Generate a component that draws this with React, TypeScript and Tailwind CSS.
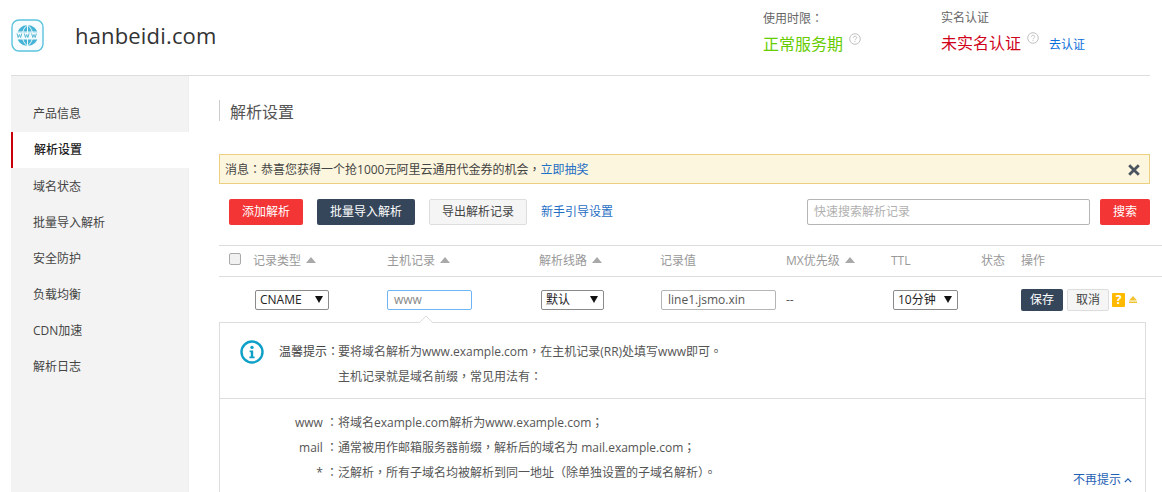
import React from "react";

function T({ s }: { s: string }) {
  const parts = s.split(/([，。：；（）])/);
  return (
    <>
      {parts.map((p, i) =>
        /^[，。：；（）]$/.test(p) ? (
          <span key={i} className="font-['Noto_Sans_CJK_TC',sans-serif]">{p}</span>
        ) : (
          <React.Fragment key={i}>{p}</React.Fragment>
        )
      )}
    </>
  );
}

function Q({ className = "" }: { className?: string }) {
  return (
    <svg viewBox="0 0 12 12" className={"w-3 h-3 " + className} fill="none" stroke="#c0c0c0" strokeWidth="1">
      <circle cx="6" cy="6" r="5.3" />
      <path d="M4.4 4.8c0-2.1 3.3-2.1 3.3-.1 0 1.2-1.7 1.3-1.7 2.6" />
      <path d="M6 8.2v1" />
    </svg>
  );
}

function Sort() {
  return (
    <svg viewBox="0 0 10 6" className="w-[10px] h-[6px] ml-[5px] mt-[-2px]" fill="#a9a9a9">
      <path d="M5 0 10 6H0z" />
    </svg>
  );
}

function Sel({ label, className }: { label: string; className: string }) {
  return (
    <div className={"h-5 border border-[#8a8a8a] rounded-[2px] bg-white flex items-center justify-between pl-[4px] pr-[5px] text-[12px] text-[#222] " + className}>
      <span>{label}</span>
      <svg viewBox="0 0 8 7" className="w-2 h-[7px]" fill="#111">
        <path d="M0 0h8L4 7z" />
      </svg>
    </div>
  );
}

const nav = ["产品信息", "解析设置", "域名状态", "批量导入解析", "安全防护", "负载均衡", "CDN加速", "解析日志"];

function Head({ label, sort }: { label: string; sort?: boolean }) {
  return (
    <div className="flex items-center text-[12px] text-[#999]">
      <span>{label}</span>
      {sort && <Sort />}
    </div>
  );
}

export default function App() {
  return (
    <div className="h-[492px] w-[1162px] overflow-hidden bg-white pl-[11px] font-['Open_Sans','Noto_Sans_CJK_SC',sans-serif] text-[12px] text-[#555]">
      <header className="h-[76px] w-[1139px] border-b border-[#dddddd] flex relative">
        <svg viewBox="0 0 33 33" className="w-[33px] h-[33px] mt-[19px]">
          <rect x="1" y="1" width="31" height="31" rx="7" fill="#f7fcfe" stroke="#5cc3de" strokeWidth="1.4" />
          <circle cx="16.5" cy="16.5" r="10.5" fill="#45b4d6" />
          <path d="M6 13h21M6 20h21" stroke="#fff" strokeWidth="0.9" />
          <path d="M16.5 6v21M16.5 6c-7 5-7 16 0 21M16.5 6c7 5 7 16 0 21" stroke="#fff" strokeWidth="0.9" fill="none" />
          <rect x="4" y="13.5" width="25" height="6.5" fill="#f2fbfd" />
          <path d="M6 14.5l1.2 4 1.2-3 1.2 3 1.2-4M13.3 14.5l1.2 4 1.2-3 1.2 3 1.2-4M20.6 14.5l1.2 4 1.2-3 1.2 3 1.2-4" stroke="#3aa9cc" strokeWidth="0.8" fill="none" />
        </svg>
        <div className="ml-[31px] mt-[18px] text-[22px] tracking-[0.17px] leading-[34px] text-[#333]">hanbeidi.com</div>
        <div className="ml-auto mr-[65px] flex">
          <div className="w-[178px] pt-[11px]">
            <div className="text-[12px] leading-[14px] text-[#666]"><T s="使用时限：" /></div>
            <div className="flex items-start mt-[6px]">
              <span className="text-[16px] leading-[24px] text-[#66cc00]">正常服务期</span>
              <Q className="ml-[6px] mt-[1px]" />
            </div>
          </div>
          <div className="w-[144px] pt-[11px]">
            <div className="text-[12px] leading-[14px] text-[#666]">实名认证</div>
            <div className="flex items-start mt-[6px] whitespace-nowrap">
              <span className="text-[16px] leading-[24px] text-[#d0021b]">未实名认证</span>
              <Q className="ml-[6px] mt-[1px]" />
              <a className="ml-[10px] mt-[4px] text-[12px] leading-[20px] text-[#0a6ed8]">去认证</a>
            </div>
          </div>
        </div>
      </header>

      <div className="flex">
        <aside className="w-[178px] h-[416px] shrink-0 bg-[#f3f3f3] pt-[20px] border-r border-[#eeeeee]">
          {nav.map((n, i) =>
            i === 1 ? (
              <div key={n} className="h-9 -mr-px mb-px bg-white border-l-2 border-[#c8000a] pl-[21px] flex items-center font-medium text-[#222]">{n}</div>
            ) : (
              <div key={n} className="h-9 pl-[22px] flex items-center text-[#444]">{n}</div>
            )
          )}
        </aside>

        <main className="pl-[30px] w-[973px] shrink-0">
          <div className="mt-[24px] h-[21px] border-l border-[#cccccc] pl-[10px] text-[16px] leading-[24px] text-[#555]">解析设置</div>

          <div className="mt-[33px] w-[931px] h-[30px] border border-[#ecd07f] bg-[#fdf6de] flex items-center pl-[5px] pr-[9px] text-[#444]">
            <span><T s="消息：恭喜您获得一个抢1000元阿里云通用代金券的机会，" /><a className="text-[#1f6fc4]">立即抽奖</a></span>
            <svg viewBox="0 0 12 12" className="w-3 h-3 ml-auto mt-[2px]" stroke="#4a5560" strokeWidth="2.8" fill="none">
              <path d="M1.2 1.2l9.6 9.6M10.8 1.2l-9.6 9.6" />
            </svg>
          </div>

          <div className="mt-[15px] w-[931px] pl-[10px] flex items-center">
            <button className="w-[74px] h-[26px] rounded-[2px] bg-[#f33535] text-white text-[12px]">添加解析</button>
            <button className="ml-[14px] w-[98px] h-[26px] rounded-[2px] bg-[#36465a] text-white text-[12px]">批量导入解析</button>
            <button className="ml-[14px] w-[98px] h-[26px] rounded-[2px] bg-[#f5f5f5] border border-[#dddddd] text-[#444] text-[12px]">导出解析记录</button>
            <a className="ml-[14px] text-[#1f6fc4]">新手引导设置</a>
            <div className="ml-auto w-[283px] h-[26px] border border-[#b5b5b5] rounded-[2px] flex items-center pl-[6px] text-[#b0b0b0]">快速搜索解析记录</div>
            <button className="ml-[10px] w-[50px] h-[26px] rounded-[2px] bg-[#f33535] text-white text-[12px]">搜索</button>
          </div>

          <div className="mt-[20px] w-[943px] h-[32px] border-y border-[#dddddd] grid grid-cols-[34px_134px_152px_121px_126px_105px_90px_40px_1fr] items-center">
            <div className="pl-[10px]">
              <div className="w-3 h-3 mt-[-4px] rounded-[2px] border border-[#aaaaaa] bg-[#f1f1f1]" />
            </div>
            <Head label="记录类型" sort />
            <Head label="主机记录" sort />
            <Head label="解析线路" sort />
            <Head label="记录值" />
            <Head label="MX优先级" sort />
            <Head label="TTL" />
            <Head label="状态" />
            <Head label="操作" />
          </div>

          <div className="w-[943px] h-[45px] grid grid-cols-[34px_134px_152px_121px_126px_105px_90px_40px_1fr] items-center">
            <div />
            <Sel label="CNAME" className="ml-[2px] w-[74px]" />
            <div className="h-5 w-[85px] border border-[#6fb5f5] rounded-[2px] pl-[6px] flex items-center text-[#888]">www</div>
            <Sel label="默认" className="ml-[2px] w-[63px]" />
            <div className="h-5 ml-[1px] w-[115px] border border-[#b5b5b5] rounded-[2px] pl-[6px] flex items-center text-[#555]">line1.jsmo.xin</div>
            <div className="text-[#555]">--</div>
            <Sel label="10分钟" className="ml-[2px] w-[65px]" />
            <div />
            <div className="flex items-center whitespace-nowrap">
              <button className="w-[42px] h-[22px] rounded-[2px] bg-[#36465a] text-white text-[12px]">保存</button>
              <button className="ml-[4px] w-[42px] h-[22px] rounded-[2px] bg-[#f5f5f5] border border-[#dddddd] text-[#444] text-[12px]">取消</button>
              <span className="ml-[3px] w-[13px] h-[14px] bg-[#ffba00] rounded-[1px] text-white text-[12px] leading-[14px] font-bold text-center">?</span>
              <svg viewBox="0 0 8 7" className="ml-[4px] w-2 h-[7px]" fill="#f2c230">
                <path d="M4 0l4 4.5H0zM0 5.5h8V7H0z" />
              </svg>
            </div>
          </div>

          <div className="relative w-[927px] h-[200px] border border-[#dddddd] text-[#555]">
            <svg viewBox="0 0 14 7" className="absolute left-[199px] top-[-7px] w-[14px] h-[7px]">
              <path d="M0 7 7 0l7 7" fill="#fff" stroke="#dddddd" />
            </svg>
            <div className="h-[76px] border-b border-[#dddddd] flex relative">
              <svg viewBox="0 0 24 24" className="ml-[20px] mt-[17px] w-6 h-6" fill="none">
                <circle cx="12" cy="12" r="10.5" stroke="#0fa0c8" strokeWidth="2.4" />
                <circle cx="12" cy="7.4" r="1.7" fill="#0fa0c8" />
                <path d="M9.6 10.6h3.6v6h1.4v1.6H9.4v-1.6h1.4v-4.4H9.6z" fill="#0fa0c8" />
              </svg>
              <div className="ml-[15px] pt-[15px] leading-[25px]">
                <div className="flex h-[25px] whitespace-nowrap">
                  <span className="w-[59px] shrink-0 text-[#444]"><T s="温馨提示：" /></span>
                  <span><T s="要将域名解析为www.example.com，在主机记录(RR)处填写www即可。" /></span>
                </div>
                <div className="pl-[59px] h-[25px]"><T s="主机记录就是域名前缀，常见用法有：" /></div>
              </div>
            </div>
            <div className="pt-[10px] leading-[25px] whitespace-nowrap">
              <div className="flex h-[25px]"><span className="w-[118px] text-right"><T s="www ：" /></span><span><T s="将域名example.com解析为www.example.com；" /></span></div>
              <div className="flex h-[25px]"><span className="w-[118px] text-right"><T s="mail ：" /></span><span><T s="通常被用作邮箱服务器前缀，解析后的域名为 mail.example.com；" /></span></div>
              <div className="flex h-[25px]"><span className="w-[118px] text-right"><T s="* ：" /></span><span><T s="泛解析，所有子域名均被解析到同一地址（除单独设置的子域名解析）。" /></span></div>
            </div>
            <div className="absolute left-[853px] top-[148px] flex items-center text-[#1f5fb4]">
              不再提示
              <svg viewBox="0 0 10 6" className="ml-[3px] w-2 h-[5px]" fill="none" stroke="#1f5fb4" strokeWidth="1.6"><path d="M1 5l4-4 4 4" /></svg>
            </div>
          </div>
        </main>
      </div>
    </div>
  );
}
